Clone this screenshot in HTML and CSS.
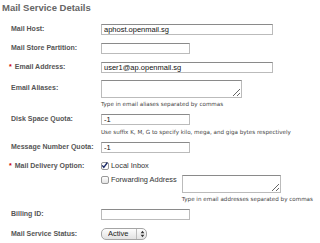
FILE: index.html
```html
<!DOCTYPE html>
<html lang="en">
<head>
    <meta charset="UTF-8">
    <title>Mail Service Details</title>
    <link rel="stylesheet" href="styles.css">
</head>
<body>
    <h2 class="section-title">Mail Service Details</h2>

    <div class="form">
        <div class="row">
            <label class="label">Mail Host:</label>
            <div class="field"><input type="text" class="text wide" value="aphost.openmail.sg" spellcheck="false"></div>
        </div>
        <div class="row">
            <label class="label">Mail Store Partition:</label>
            <div class="field"><input type="text" class="text short"></div>
        </div>
        <div class="row row-before-area">
            <label class="label"><span class="req">*</span>Email Address:</label>
            <div class="field"><input type="text" class="text wide" value="user1@ap.openmail.sg" spellcheck="false"></div>
        </div>
        <div class="row row-tight">
            <label class="label label-area">Email Aliases:</label>
            <div class="field">
                <textarea class="area"></textarea>
                <div class="hint hint-area">Type in email aliases separated by commas</div>
            </div>
        </div>
        <div class="row row-tight">
            <label class="label">Disk Space Quota:</label>
            <div class="field">
                <input type="text" class="text short" value="-1">
                <div class="hint">Use suffix K, M, G to specify kilo, mega, and giga bytes respectively</div>
            </div>
        </div>
        <div class="row">
            <label class="label">Message Number Quota:</label>
            <div class="field"><input type="text" class="text short" value="-1"></div>
        </div>
        <div class="row row-tight row-delivery">
            <label class="label label-check"><span class="req">*</span>Mail Delivery Option:</label>
            <div class="field">
                <div class="check-line">
                    <span class="box checked">
                        <svg width="9" height="9" viewBox="0 0 9 9"><path d="M1.6 4.4 L3.6 7 L8.2 0.6" fill="none" stroke="#1d2d6b" stroke-width="1.8"/></svg>
                    </span>
                    <span>Local Inbox</span>
                </div>
                <div class="check-line forward">
                    <span class="box"></span>
                    <span class="forward-text">Forwarding Address</span>
                    <div class="forward-field">
                        <textarea class="area area-forward"></textarea>
                        <div class="hint hint-area">Type in email addresses separated by commas</div>
                    </div>
                </div>
            </div>
        </div>
        <div class="row">
            <label class="label">Billing ID:</label>
            <div class="field"><input type="text" class="text short"></div>
        </div>
        <div class="row">
            <label class="label label-select">Mail Service Status:</label>
            <div class="field">
                <span class="select-wrap">
                    <select class="select">
                        <option>Active</option>
                        <option>Locked</option>
                    </select>
                    <span class="select-arrows">
                        <svg width="5" height="8" viewBox="0 0 5 8"><path d="M0.6 3.2 L2.5 0.8 L4.4 3.2 Z M0.6 4.8 L2.5 7.2 L4.4 4.8 Z" fill="#333"/></svg>
                    </span>
                </span>
            </div>
        </div>
    </div>
</body>
</html>
```

FILE: styles.css
```css
body {
    margin: 0;
    font-family: "Liberation Sans", Arial, sans-serif;
    background-color: white;
    color: #555;
}

.section-title {
    margin: 1px 0 10px 2px;
    font-size: 9.5px;
    line-height: 13px;
    color: #666;
}

.form {
    padding-left: 11px;
}

.row {
    display: flex;
    align-items: flex-start;
    margin-bottom: 8px;
}

.row-before-area {
    margin-bottom: 7px;
}

.row-tight {
    margin-bottom: 5px;
}

.row-delivery {
    margin-top: 1px;
}

.label {
    width: 90px;
    flex-shrink: 0;
    font-size: 7px;
    font-weight: bold;
    line-height: 10px;
    color: #555;
}

.label-area {
    padding-top: 3px;
}

.label-select {
    line-height: 12px;
}

.req {
    color: #c00;
    margin-left: -2px;
    margin-right: 3px;
}

.field {
    display: flex;
    flex-direction: column;
    font-size: 8px;
}

.text {
    box-sizing: border-box;
    height: 11px;
    margin: 0;
    padding: 0 2px;
    border: 1px solid #bbb;
    border-top-color: #8a8a8a;
    font-family: "Liberation Sans", Arial, sans-serif;
    font-size: 7.5px;
    color: #111;
    outline: none;
}

.wide {
    width: 172px;
}

.short {
    width: 89px;
}

.area {
    display: block;
    box-sizing: border-box;
    width: 141px;
    height: 18px;
    margin: 0;
    border: 1px solid #bbb;
    border-top-color: #8a8a8a;
    font-size: 7.5px;
}

.area-forward {
    width: 99px;
}

.hint {
    margin-top: 3px;
    font-family: "DejaVu Sans", Verdana, sans-serif;
    font-size: 5.6px;
    line-height: 9px;
    color: #444;
    white-space: nowrap;
}

.hint-area {
    margin-top: 2px;
}

.check-line {
    display: flex;
    align-items: flex-start;
    gap: 2px;
    font-size: 7.4px;
    line-height: 10px;
    color: #333;
    white-space: nowrap;
}

.forward {
    margin-top: 4px;
}

.forward-field {
    margin-left: 3px;
}

.box {
    box-sizing: border-box;
    display: inline-flex;
    width: 8px;
    height: 8px;
    margin-top: 1px;
    border: 1px solid #999;
    border-radius: 2px;
    background: linear-gradient(#fff, #e3e3e3);
}

.box svg {
    margin: -2px 0 0 -1px;
}

.box.checked {
    background: white;
}

.select-wrap {
    position: relative;
    display: block;
    height: 12px;
}

.select {
    display: block;
    appearance: none;
    -webkit-appearance: none;
    box-sizing: border-box;
    width: 46px;
    height: 12px;
    margin: 0;
    padding: 0 0 0 6px;
    border: 1px solid #a5a5a5;
    border-radius: 5px;
    background: linear-gradient(#fdfdfd, #e2e2e2);
    font-family: "Liberation Sans", Arial, sans-serif;
    font-size: 7.5px;
    line-height: 10px;
    color: #222;
}

.select-arrows {
    position: absolute;
    left: 35px;
    top: 1px;
    width: 10px;
    height: 10px;
    border-left: 1px solid #bbb;
    display: flex;
    align-items: center;
    justify-content: center;
}
```
